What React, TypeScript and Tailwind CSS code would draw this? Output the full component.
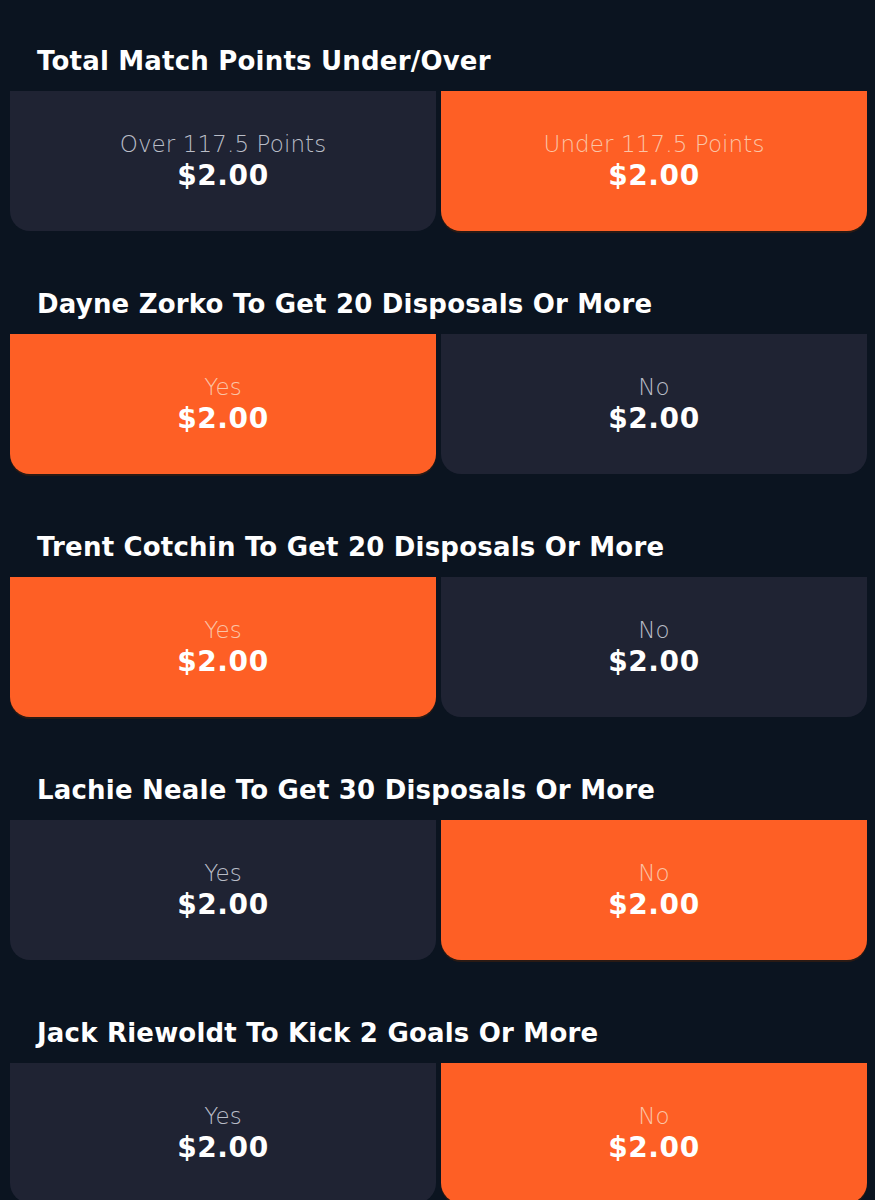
import React from "react";

type Market = { title: string; left: string; right: string; selected: "left" | "right" };

const markets: Market[] = [
  { title: "Total Match Points Under/Over", left: "Over 117.5 Points", right: "Under 117.5 Points", selected: "right" },
  { title: "Dayne Zorko To Get 20 Disposals Or More", left: "Yes", right: "No", selected: "left" },
  { title: "Trent Cotchin To Get 20 Disposals Or More", left: "Yes", right: "No", selected: "left" },
  { title: "Lachie Neale To Get 30 Disposals Or More", left: "Yes", right: "No", selected: "right" },
  { title: "Jack Riewoldt To Kick 2 Goals Or More", left: "Yes", right: "No", selected: "right" },
];

function Option({ label, active }: { label: string; active: boolean }) {
  return (
    <button
      className={
        active
          ? "h-[140px] rounded-b-[20px] bg-[#fe5f25] flex flex-col items-center justify-center pb-[3px] shadow-[0_2px_0_#2a1a14]"
          : "h-[140px] rounded-b-[20px] bg-[#1f2333] flex flex-col items-center justify-center pb-[3px]"
      }
    >
      <span
        className={
          active
            ? "text-[23px] leading-[31px] font-light text-[#fbc4a6] tracking-[0.1px]"
            : "text-[23px] leading-[31px] font-light text-[#b9bdc7] tracking-[0.1px]"
        }
      >
        {label}
      </span>
      <span className="text-[28px] leading-[31px] font-bold text-white tracking-[0.6px]">$2.00</span>
    </button>
  );
}

export default function App() {
  return (
    <div
      className="min-h-[1200px] w-[875px] bg-[#0b1420] pt-[31px] overflow-hidden"
      style={{ fontFamily: '"DejaVu Sans", "Noto Sans", sans-serif' }}
    >
      {markets.map((m, i) => (
        <div key={i} className="mb-[43px]">
          <div className="h-[60px] flex items-center pl-[37px]">
            <h2 className="text-[26px] leading-[30px] font-bold text-white tracking-[0.2px]">{m.title}</h2>
          </div>
          <div className="grid grid-cols-2 gap-[5px] pl-[10px] pr-[8px]">
            <Option label={m.left} active={m.selected === "left"} />
            <Option label={m.right} active={m.selected === "right"} />
          </div>
        </div>
      ))}
    </div>
  );
}
